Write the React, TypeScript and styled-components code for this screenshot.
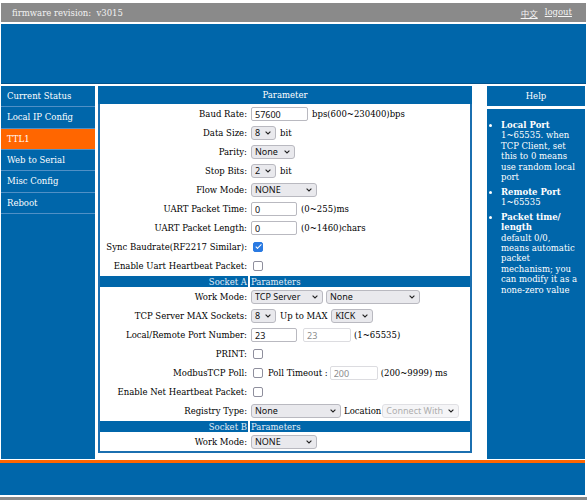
import React from 'react';
import styled, { createGlobalStyle } from 'styled-components';

const BLUE = '#0066aa';
const ORANGE = '#ff6600';
const GRAY = '#8a8a8a';

const GlobalStyle = createGlobalStyle`
  * { box-sizing: border-box; }
  html, body { margin: 0; padding: 0; background: #fff; }
  body {
    font-family: "DejaVu Serif", serif;
    font-size: 8.5px;
    color: #000;
  }
`;

const Page = styled.div`
  width: 587px;
  padding-top: 3px;
`;

const TopBar = styled.div`
  margin: 0 1px;
  height: 19px;
  background: ${GRAY};
  color: #f2f2f2;
  display: flex;
  align-items: center;
  justify-content: space-between;
  padding: 0 14px 0 11px;
`;

const TopLinks = styled.div`
  display: flex;
  gap: 7px;
  a {
    color: #f5f5f5;
    text-decoration: underline;
  }
`;

const Cjk = styled.a`
  font-family: "Noto Sans CJK SC", sans-serif;
`;

const Banner = styled.div`
  margin: 2px 1px 0;
  height: 60px;
  background: ${BLUE};
  border-bottom: 1px solid #00528c;
`;

const Columns = styled.div`
  display: flex;
  align-items: flex-start;
  margin-top: 2px;
  padding-left: 1px;
  height: 373px;
`;

const Nav = styled.div`
  width: 94px;
  height: 373px;
  background: ${BLUE};
  display: flex;
  flex-direction: column;
`;

const NavItem = styled.div<{ $active?: boolean }>`
  height: 21.33px;
  border-bottom: 1px solid #5090c6;
  padding-left: 6px;
  display: flex;
  align-items: center;
  color: #fff;
  background: ${(p) => (p.$active ? ORANGE : BLUE)};
`;

const Panel = styled.div`
  margin-left: 3px;
  width: 374px;
  border: 2px solid #1b6fb0;
  border-top: none;
`;

const PanelHeader = styled.div`
  height: 18px;
  margin: 0 -2px;
  background: ${BLUE};
  color: #fff;
  display: flex;
  align-items: center;
  justify-content: center;
`;

const Form = styled.div`
  display: grid;
  grid-template-columns: 148px 1fr;
  column-gap: 2px;
  row-gap: 1px;
  padding-top: 1px;
`;

const Label = styled.div`
  height: 18px;
  display: flex;
  align-items: center;
  justify-content: flex-end;
  padding-right: 1px;
  white-space: nowrap;
`;

const Value = styled.div`
  height: 18px;
  display: flex;
  align-items: center;
  padding-left: 1px;
  white-space: nowrap;
`;

const Band = styled.div<{ $right?: boolean }>`
  height: 11px;
  background: ${BLUE};
  color: #e4eef7;
  display: flex;
  align-items: center;
  justify-content: ${(p) => (p.$right ? 'flex-start' : 'flex-end')};
  padding: 0 1px;
`;

const Note = styled.span<{ $gap?: number }>`
  margin-left: ${(p) => p.$gap ?? 4}px;
`;

const TextInput = styled.input<{ $w: number; $gap?: number }>`
  width: ${(p) => p.$w}px;
  height: 14px;
  margin: 0 0 0 ${(p) => p.$gap ?? 0}px;
  padding: 0 3px;
  border: 1px solid #b9b9c0;
  border-radius: 2px;
  background: #fff;
  font-family: "Noto Sans", sans-serif;
  font-size: 9px;
  color: #111;
  outline: none;
  &:disabled {
    border-color: #dcdce0;
    color: #8c8c8c;
    background: #fff;
  }
`;

const SelectBox = styled.span<{ $w: number; $gap?: number }>`
  position: relative;
  display: inline-flex;
  width: ${(p) => p.$w}px;
  height: 14px;
  margin-left: ${(p) => p.$gap ?? 0}px;
  svg {
    position: absolute;
    right: 5px;
    top: 5px;
    pointer-events: none;
  }
`;

const SelectField = styled.select`
  appearance: none;
  width: 100%;
  height: 14px;
  margin: 0;
  padding: 0 10px 0 3px;
  border: 1px solid #b9b9c0;
  border-radius: 3px;
  background: #e9e9ed;
  font-family: "Noto Sans", sans-serif;
  font-size: 9px;
  line-height: 12px;
  color: #111;
  outline: none;
  &:disabled {
    background: #f2f2f4;
    border-color: #d4d4d9;
    color: #8c8c8c;
  }
`;

const Check = styled.input`
  appearance: none;
  position: relative;
  width: 10px;
  height: 10px;
  margin: 0 0 0 2px;
  border: 1px solid #8f8f9d;
  border-radius: 2px;
  background: #fff;
  &:checked {
    background: #2a7ae2;
    border-color: #2a7ae2;
  }
  &:checked::after {
    content: '';
    position: absolute;
    left: 2.6px;
    top: 0.4px;
    width: 2.4px;
    height: 5px;
    border: solid #fff;
    border-width: 0 1.4px 1.4px 0;
    transform: rotate(45deg);
  }
`;

const HelpCol = styled.div`
  margin-left: 15px;
  width: 98px;
  height: 373px;
  display: flex;
  flex-direction: column;
`;

const HelpHeader = styled.div`
  height: 20px;
  background: ${BLUE};
  color: #fff;
  display: flex;
  align-items: center;
  justify-content: center;
`;

const HelpBody = styled.div`
  flex: 1;
  margin-top: 3px;
  background: ${BLUE};
  color: #fff;
  padding: 11px 4px 0 0;
`;

const HelpList = styled.ul`
  margin: 0;
  padding-left: 14px;
  list-style: disc;
  line-height: 10.4px;
  li {
    margin-bottom: 4.3px;
  }
  b {
    display: block;
  }
`;

const Footer = styled.div`
  margin-top: 1px;
  margin-right: 2px;
  height: 35px;
  border-top: 3px solid ${ORANGE};
  background: ${BLUE};
`;

const BottomBar = styled.div`
  margin-top: 2px;
  height: 10px;
  background: ${GRAY};
`;

const Chevron = () => (
  <svg width="6" height="4" viewBox="0 0 6 4">
    <path d="M0.6 0.6 L3 3 L5.4 0.6" fill="none" stroke="#222" strokeWidth="1.1" />
  </svg>
);

const Select = ({ w, gap, value, disabled }: { w: number; gap?: number; value: string; disabled?: boolean }) => (
  <SelectBox $w={w} $gap={gap}>
    <SelectField defaultValue={value} disabled={disabled}>
      <option>{value}</option>
    </SelectField>
    <Chevron />
  </SelectBox>
);

const navItems = ['Current Status', 'Local IP Config', 'TTL1', 'Web to Serial', 'Misc Config', 'Reboot'];

const App = () => {
  return (
    <>
      <GlobalStyle />
      <Page>
        <TopBar>
          <span>firmware revision:&nbsp; v3015</span>
          <TopLinks>
            <Cjk href="#">中文</Cjk>
            <a href="#">logout</a>
          </TopLinks>
        </TopBar>
        <Banner />
        <Columns>
          <Nav>
            {navItems.map((n) => (
              <NavItem key={n} $active={n === 'TTL1'}>
                {n}
              </NavItem>
            ))}
          </Nav>
          <Panel>
            <PanelHeader>Parameter</PanelHeader>
            <Form>
              <Label>Baud Rate:</Label>
              <Value>
                <TextInput $w={57} defaultValue="57600" />
                <Note>bps(600~230400)bps</Note>
              </Value>
              <Label>Data Size:</Label>
              <Value>
                <Select w={25} value="8" />
                <Note>bit</Note>
              </Value>
              <Label>Parity:</Label>
              <Value>
                <Select w={44} value="None" />
              </Value>
              <Label>Stop Bits:</Label>
              <Value>
                <Select w={25} value="2" />
                <Note>bit</Note>
              </Value>
              <Label>Flow Mode:</Label>
              <Value>
                <Select w={66} value="NONE" />
              </Value>
              <Label>UART Packet Time:</Label>
              <Value>
                <TextInput $w={46} defaultValue="0" />
                <Note>(0~255)ms</Note>
              </Value>
              <Label>UART Packet Length:</Label>
              <Value>
                <TextInput $w={46} defaultValue="0" />
                <Note>(0~1460)chars</Note>
              </Value>
              <Label>Sync Baudrate(RF2217 Similar):</Label>
              <Value>
                <Check type="checkbox" defaultChecked />
              </Value>
              <Label>Enable Uart Heartbeat Packet:</Label>
              <Value>
                <Check type="checkbox" />
              </Value>

              <Band>Socket A</Band>
              <Band $right>Parameters</Band>

              <Label>Work Mode:</Label>
              <Value>
                <Select w={72} value="TCP Server" />
                <Select w={94} gap={3} value="None" />
              </Value>
              <Label>TCP Server MAX Sockets:</Label>
              <Value>
                <Select w={25} value="8" />
                <Note>Up to MAX</Note>
                <Select w={42} gap={4} value="KICK" />
              </Value>
              <Label>Local/Remote Port Number:</Label>
              <Value>
                <TextInput $w={46} defaultValue="23" />
                <TextInput $w={48} $gap={6} defaultValue="23" disabled />
                <Note $gap={3}>(1~65535)</Note>
              </Value>
              <Label>PRINT:</Label>
              <Value>
                <Check type="checkbox" />
              </Value>
              <Label>ModbusTCP Poll:</Label>
              <Value>
                <Check type="checkbox" />
                <Note $gap={5}>Poll Timeout :</Note>
                <TextInput $w={48} $gap={2} defaultValue="200" disabled />
                <Note $gap={3}>(200~9999) ms</Note>
              </Value>
              <Label>Enable Net Heartbeat Packet:</Label>
              <Value>
                <Check type="checkbox" />
              </Value>
              <Label>Registry Type:</Label>
              <Value>
                <Select w={90} value="None" />
                <Note $gap={3}>Location</Note>
                <Select w={77} gap={1} value="Connect With" disabled />
              </Value>

              <Band>Socket B</Band>
              <Band $right>Parameters</Band>

              <Label>Work Mode:</Label>
              <Value>
                <Select w={66} value="NONE" />
              </Value>
            </Form>
          </Panel>
          <HelpCol>
            <HelpHeader>Help</HelpHeader>
            <HelpBody>
              <HelpList>
                <li>
                  <b>Local Port</b>
                  1~65535. when TCP Client, set this to 0 means use random local port
                </li>
                <li>
                  <b>Remote Port</b>
                  1~65535
                </li>
                <li>
                  <b>Packet time/ length</b>
                  default 0/0, means automatic packet mechanism; you can modify it as a none-zero value
                </li>
              </HelpList>
            </HelpBody>
          </HelpCol>
        </Columns>
        <Footer />
        <BottomBar />
      </Page>
    </>
  );
};

export default App;
